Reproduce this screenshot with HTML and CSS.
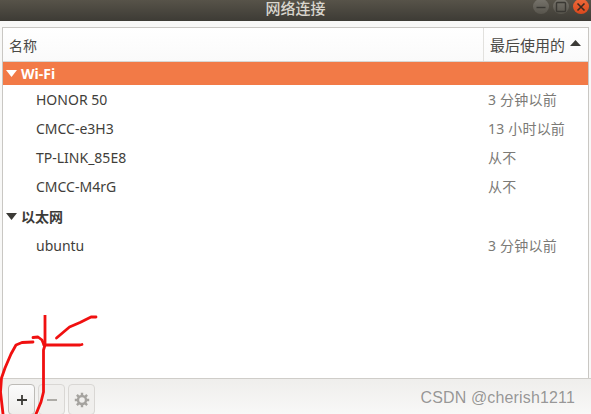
FILE: index.html
```html
<!DOCTYPE html>
<html lang="zh">
<head>
<meta charset="utf-8">
<title>网络连接</title>
<link rel="stylesheet" href="styles.css">
</head>
<body>
<div class="window">
  <header class="titlebar">
    <span class="title">网络连接</span>
    <div class="controls">
      <span class="ctl ctl-min"><svg width="12" height="12" viewBox="0 0 12 12"><path d="M1.5 6.5h9" stroke="#3a3833" stroke-width="1.4"/></svg></span>
      <span class="ctl ctl-max"><svg width="12" height="12" viewBox="0 0 12 12"><rect x="1.5" y="1.5" width="9" height="9" rx="1" fill="none" stroke="#3a3833" stroke-width="1.4"/></svg></span>
      <span class="ctl ctl-close"><svg width="12" height="12" viewBox="0 0 12 12"><path d="M2.5 2.5l7 7M9.5 2.5l-7 7" stroke="#3a2a20" stroke-width="1.6"/></svg></span>
    </div>
  </header>
  <main class="body">
    <section class="list">
      <div class="head">
        <div class="col-name">名称</div>
        <div class="col-used">最后使用的<svg class="sort" width="11" height="6" viewBox="0 0 11 6"><path d="M5.5 0L11 6H0z" fill="#3c3b37"/></svg></div>
      </div>
      <div class="group group-selected">
        <svg class="arrow" width="11" height="7" viewBox="0 0 11 7"><path d="M0 0h11L5.5 7z" fill="#fff"/></svg>
        <span>Wi-Fi</span>
      </div>
      <div class="row"><span>HONOR 50</span><span class="when">3 分钟以前</span></div>
      <div class="row"><span>CMCC-e3H3</span><span class="when">13 小时以前</span></div>
      <div class="row"><span>TP-LINK_85E8</span><span class="when">从不</span></div>
      <div class="row"><span>CMCC-M4rG</span><span class="when">从不</span></div>
      <div class="group group-plain">
        <svg class="arrow" width="11" height="7" viewBox="0 0 11 7"><path d="M0 0h11L5.5 7z" fill="#3c3b37"/></svg>
        <span>以太网</span>
      </div>
      <div class="row"><span>ubuntu</span><span class="when">3 分钟以前</span></div>
    </section>
    <footer class="toolbar">
      <button class="tool tool-active"><svg width="12" height="12" viewBox="0 0 12 12"><path d="M6 1v10M1 6h10" stroke="#3c3b37" stroke-width="1.8"/></svg></button>
      <button class="tool"><svg width="12" height="12" viewBox="0 0 12 12"><path d="M1 6h10" stroke="#a5a39f" stroke-width="1.8"/></svg></button>
      <button class="tool"><svg width="16" height="16" viewBox="0 0 16 16"><g fill="none" stroke="#a5a39f"><circle cx="8" cy="8" r="4" stroke-width="2.4"/><path stroke-width="2.4" d="M8 .8v2.6M8 12.6v2.6M.8 8h2.6M12.6 8h2.6M2.9 2.9l1.9 1.9M11.2 11.2l1.9 1.9M13.1 2.9l-1.9 1.9M4.8 11.2l-1.9 1.9"/></g></svg></button>
    </footer>
  </main>
  <svg class="scribble" width="100" height="99" viewBox="0 315 100 99"><g fill="none" stroke="#f01010" stroke-width="2.8" stroke-linecap="round" stroke-linejoin="round"><path d="M45 315V345L43.500 350V392L41 402L36 414"/><path d="M44 345H80L82 344.500"/><path d="M56.500 338L63 332.500L69.500 327L80 322.500L91 317H96"/><path d="M33 342L22 342.500L16 345L11 354L5 368L1.500 378L.5 392L3 414"/><path d="M33 337.500L38 337L42 340L44 345"/></g></svg>
  <div class="watermark">CSDN @cherish1211</div>
</div>
</body>
</html>
```
FILE: styles.css
```css
* { box-sizing: border-box; }
html, body { margin: 0; padding: 0; }
body {
  width: 591px;
  height: 414px;
  overflow: hidden;
  background: #f6f5f4;
  font-family: "Noto Sans", "Noto Sans CJK SC", sans-serif;
}
.window {
  position: relative;
  width: 591px;
  height: 414px;
  display: flex;
  flex-direction: column;
  overflow: hidden;
}
.titlebar {
  position: relative;
  height: 21px;
  flex: none;
  background: linear-gradient(#575349, #3d3b35);
  display: flex;
  align-items: flex-start;
  justify-content: center;
}
.title {
  color: #d8d5cd;
  font-size: 15px;
  line-height: 15px;
  font-family: "Noto Sans CJK SC", sans-serif;
  font-weight: 500;
}
.controls {
  position: absolute;
  top: -1px;
  right: 2px;
  display: flex;
  gap: 4px;
}
.ctl {
  width: 16px;
  height: 15px;
  border-radius: 50%;
  display: flex;
  align-items: center;
  justify-content: center;
  background: linear-gradient(#77746c, #57544c);
}
.ctl-close { background: linear-gradient(#f0693a, #d9481c); }
.body {
  flex: 1;
  display: flex;
  flex-direction: column;
  padding: 6px 2px 0 2px;
  background: #f8f8f7;
  min-height: 0;
}
.list {
  flex: 1;
  background: #fff;
  border: 1px solid #c9c7c3;
  border-bottom: 0;
  min-height: 0;
}
.head {
  height: 34px;
  display: flex;
  border-bottom: 1px solid #d8d6d3;
  background: linear-gradient(#fff, #fafafa);
  color: #4a4945;
  font-size: 15px;
  font-family: "Noto Sans CJK SC", sans-serif;
}
.col-name {
  flex: 1;
  display: flex;
  align-items: center;
  padding-left: 6px;
  font-size: 14px;
}
.col-used {
  width: 105px;
  display: flex;
  align-items: center;
  gap: 5px;
  padding-left: 6px;
  border-left: 1px solid #e2e1de;
}
.sort { margin-top: -3px; }
.group {
  display: flex;
  align-items: center;
  gap: 4px;
  padding-left: 3px;
  font-weight: 700;
  font-size: 14px;
  font-family: "Noto Sans", "Noto Sans CJK SC", sans-serif;
}
.group-selected {
  height: 23px;
  background: #f27a47;
  color: #fff;
}
.group-plain {
  height: 30px;
  color: #3c3b37;
  font-size: 14px;
}
.row {
  height: 29px;
  display: flex;
  align-items: center;
  padding-left: 33px;
  font-size: 14px;
  color: #3f3e3a;
}
.row > span:first-child { flex: 1; }
.when {
  width: 101px;
  margin-top: -2px;
  padding-left: 1px;
  color: #7b7a76;
  font-size: 14px;
  letter-spacing: 0.2px;
  font-family: "Noto Sans", "Noto Sans CJK SC", sans-serif;
}
.toolbar {
  height: 36px;
  flex: none;
  margin: 0 -2px;
  padding: 5px 8px 0;
  display: flex;
  gap: 3px;
  border-top: 1px solid #cfcdc9;
  background: linear-gradient(#efeeec, #f8f8f7);
}
.tool {
  width: 27px;
  height: 31px;
  padding: 0;
  border: 1px solid #d9d7d4;
  border-radius: 4px;
  background: #f0efed;
  display: flex;
  align-items: center;
  justify-content: center;
}
.tool-active {
  border-color: #bdbbb7;
  background: linear-gradient(#fbfbfb, #efeeec);
}
.scribble {
  position: absolute;
  left: 0;
  top: 315px;
}
.watermark {
  position: absolute;
  right: 16px;
  top: 389px;
  font-family: "Liberation Sans", sans-serif;
  font-size: 16px;
  line-height: 18px;
  letter-spacing: 0.15px;
  color: rgba(90, 90, 90, 0.62);
}
```
